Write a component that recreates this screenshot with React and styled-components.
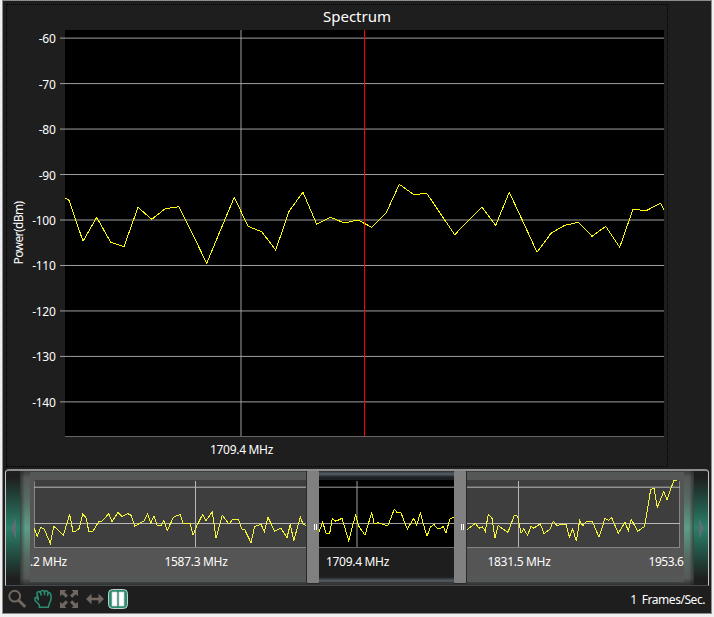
import React from "react";
import styled, { createGlobalStyle } from "styled-components";

const GlobalStyle = createGlobalStyle`
  * {
    box-sizing: border-box;
  }

  body {
    margin: 0;
    background: #f0f0f0;
    font-family: "Noto Sans", "Open Sans", sans-serif;
    color: #fff;
  }
`;

const Window = styled.main`
  width: 710px;
  height: 614px;
  margin-left: 2px;
  display: flex;
  flex-direction: column;
  background: #1e1e1e;
  border: 1px solid #8c8c8c;
`;

const ChartPanel = styled.section`
  width: 662px;
  height: 463px;
  margin: 3px 0 0 3px;
  border: 1px dotted #000;
`;

const ChartTitle = styled.h1`
  height: 24px;
  margin: 0;
  padding-left: 40px;
  font-size: 15px;
  font-weight: 400;
  line-height: 22px;
  text-align: center;
`;

const Chart = styled.svg`
  display: block;
`;

const Label = styled.text`
  fill: #fff;
  font-size: 12px;
  letter-spacing: ${({ $spacing }) => $spacing || "-0.3px"};
  text-anchor: ${({ $anchor }) => $anchor || "middle"};
`;

const GridLine = styled.path`
  fill: none;
  stroke: ${({ $color }) => $color || "#a0a0a0"};
  stroke-width: 1;
`;

const Trace = styled.polyline`
  fill: none;
  stroke: ${({ $color }) => $color || "#ffff00"};
  stroke-width: 1;
  shape-rendering: crispEdges;
`;

const Navigator = styled.section`
  position: relative;
  width: 704px;
  height: 117px;
  margin: 2px 0 0 2px;
  display: flex;
  overflow: hidden;
  background: #4a4a4a;
  border: 1px solid #c8c8c8;
  border-top: 2px solid #8e8e8e;
  border-bottom-color: #45484a;
  border-radius: 4px 4px 0 0;
`;

const ScrollButton = styled.button`
  width: 14px;
  padding: 0;
  border: 0;
  display: flex;
  align-items: center;
  justify-content: center;
  background: linear-gradient(#1e1e1e 5%, #245447 30%, #2b8069 50%, #245447 70%, #1e1e1e 95%);
`;

const Overview = styled.div`
  position: relative;
  flex: 1;
  height: 114px;
  background:
    linear-gradient(
      90deg,
      rgba(30, 30, 30, 0.6),
      transparent 5px,
      transparent calc(100% - 5px),
      rgba(30, 30, 30, 0.6)
    ),
    linear-gradient(#3a3d3c, #555957 6%, #566b63 25%, #5c9d88 50%, #566b63 75%, #555957 94%, #303232);
`;

const Track = styled.div`
  width: 654px;
  height: 101px;
  margin: 5px 0 0 10px;
  overflow: hidden;
  background: #555;
  border-radius: 4px;
`;

const Shade = styled.div`
  position: absolute;
  top: ${({ $top }) => $top}px;
  left: 10px;
  width: 654px;
  height: 6px;
  background: #535857;
`;

const RangeWindow = styled.div`
  position: absolute;
  top: 0;
  left: 301px;
  width: 159px;
  height: 114px;
  display: flex;
`;

const Handle = styled.div`
  width: 12px;
  height: 112px;
  padding-left: ${({ $shift }) => $shift || 0}px;
  display: flex;
  gap: 1px;
  align-items: center;
  justify-content: center;
  background: #808080;
  border-radius: 1px;
  box-shadow: 0 0 0 1px #292929;
`;

const Grip = styled.i`
  width: 1px;
  height: 6px;
  margin-top: 0;
  background: #fff;
`;

const Selection = styled.div`
  position: relative;
  z-index: 1;
  width: 135px;
  height: 112px;
  padding: 8px 0 0;
  background: linear-gradient(
    #2a2d2f,
    #566067 3px,
    #1e2225 6px,
    #1e1e1e 8px,
    #1e1e1e 106px,
    #586067 110px,
    #2a2d2f
  );
`;

const Toolbar = styled.footer`
  height: 26px;
  padding: 0 6px 0 5px;
  display: flex;
  align-items: center;
`;

const Tool = styled.button`
  width: ${({ $width }) => $width || 18}px;
  height: 20px;
  margin: 0 ${({ $gap }) => $gap || 8}px 0 0;
  padding: 0;
  border: 0;
  background: none;
  line-height: 0;
`;

const FrameRate = styled.span`
  margin-left: auto;
  display: flex;
  gap: 5px;
  font-size: 12px;
  letter-spacing: -0.45px;
`;

const levels = [-60, -70, -80, -90, -100, -110, -120, -130, -140];
const levelToY = (level) => 220 + (-100 - level) * 4.547;

const spectrum = `65,198 69,200.3 83,241.3 96.7,217.3 110.7,242.3 124,246.7 138,207.3
  151.7,219.3 165.3,208.7 179,206.7 193,235 206.7,263.3 220.5,230 234.3,197.3
  248,226.3 261.7,231.7 275.7,250 289.3,210.7 303,192.3 316.7,224.3 330.7,217.3
  344.3,223 358,220 371.7,227.3 386,213.3 399.3,184.3 413.3,194.3 427,193.7
  440.7,214 454.7,234.7 468.3,220.7 482,207.3 495.7,225.3 509.3,192.3 523.3,222.3
  537,252.3 551,233.3 564.7,225.3 578.3,222.3 592,236.3 605.7,226.3 619.7,247.3
  633,209.3 646.3,210.7 660.7,203 664,209.7`;

// overview samples, three units per pixel, each block with its own start
const sweep = [
  [0, [[102,192],[112,217],[122,190],[132,194],[151,238],[161,187],[170,194],[190,214],[209,151],[219,203],[228,201],[238,193],[248,151],[259,162],[266,202],[278,203],[296,173],[306,172],[326,149],[336,173],[354,145],[366,157],[384,149],[393,154],[404,187],[424,175],[433,170],[443,149],[452,178],[462,155],[471,183],[483,185],[491,169],[502,200]]],
  [170, [[10,160],[31,151],[39,178],[60,178],[69,214],[80,186],[98,151],[108,170],[127,143],[138,223],[157,154],[177,181],[187,167],[206,167],[215,195],[224,197],[243,236],[254,187],[273,181],[283,203],[294,160],[314,202],[332,192],[351,221],[361,181],[371,230],[391,160],[400,182],[410,184]]],
  [300, [[57,204],[68,175],[78,207],[89,208],[97,163],[107,172],[126,163],[146,230],[167,151],[175,184],[195,214],[215,145],[223,180],[235,176],[263,186],[283,136],[292,146],[303,147],[322,195],[341,163],[350,184],[361,146],[371,184],[381,217],[391,190],[401,181],[411,192],[419,195],[430,187],[438,208],[449,165],[462,160]]],
  [450, [[51,197],[76,178],[87,193],[97,188],[106,202],[115,151],[126,163],[135,223],[145,184],[155,193],[174,205],[193,154],[203,157],[213,208],[221,195],[233,214],[243,186],[251,193],[271,179],[282,209],[300,196],[310,172],[320,184],[348,180],[358,220],[368,194],[379,232],[389,169],[398,185],[409,173]]],
  [574, [[48,173],[56,174],[75,220],[93,163],[104,169],[113,161],[133,208],[153,175],[163,201],[172,166],[191,202],[212,187],[230,76],[240,73],[250,130],[269,83],[279,107],[299,50],[309,49]]],
];

const sweepPoints = sweep
  .flatMap(([start, samples]) =>
    samples.map(([x, y]) => `${(start + x / 3).toFixed(1)},${(464 + y / 3).toFixed(1)}`)
  )
  .join(" ");

const SpectrumChart = () => {
  return (
    <ChartPanel>
      <ChartTitle>Spectrum</ChartTitle>
      <Chart width="660" height="437" viewBox="7 29 660 437">
        <rect x="65" y="30" width="599" height="406" />

        {levels.map((level) => (
          <React.Fragment key={level}>
            <GridLine d={`M60 ${levelToY(level)}H664`} />
            <Label x="55.5" y={Math.round(levelToY(level)) + 5} $anchor="end">
              {level}
            </Label>
          </React.Fragment>
        ))}

        <GridLine d="M241 30V436" />
        <GridLine $color="#666" d="M65 436.5H664" />
        <Trace points={spectrum} />
        <GridLine $color="#f00" d="M364.5 30V436" />
        <Label x="241.5" y="454">
          1709.4 MHz
        </Label>
        <Label transform="translate(23 233) rotate(-90)" $spacing="-0.6px">
          Power(dBm)
        </Label>
      </Chart>
    </ChartPanel>
  );
};

const OverviewChart = ({ x, y, width, height, active }) => {
  return (
    <Chart width={width} height={height} viewBox={`${x} ${y} ${width} ${height}`}>
      <rect x="34" y="480" width="646" height="67" fill={active ? "#000" : "#3e3e3e"} />
      <GridLine $color={active ? "#666" : "#858585"} d="M34.5 481V547M34 547.5H680M679.5 481V547" />
      <GridLine
        $color={active ? "#a0a0a0" : "#b8b8b8"}
        d="M34 487.2H680M34 523.5H680M195.5 481V547M357 481V547M518.5 481V547"
      />
      <Trace $color={active ? "#ffff00" : "#f4f43a"} points={sweepPoints} />
      {active ? (
        <Label x="357.5" y="566">
          1709.4 MHz
        </Label>
      ) : (
        <>
          <Label x="30" y="566" $anchor="start">
            .2 MHz
          </Label>
          <Label x="196" y="566">
            1587.3 MHz
          </Label>
          <Label x="519" y="566">
            1831.5 MHz
          </Label>
          <Label x="648.5" y="566" $anchor="start" $spacing="-0.45px">
            1953.6
          </Label>
        </>
      )}
    </Chart>
  );
};

const SpectrumNavigator = () => {
  return (
    <Navigator>
      <ScrollButton aria-label="Scroll left">
        <svg width="5" height="21">
          <path d="M5 0V21L0 10.5Z" fill="#5e6c75" />
        </svg>
      </ScrollButton>

      <Overview>
        <Shade $top={1} />
        <Shade $top={105} />
        <Track>
          <OverviewChart x={30} y={476} width={654} height={101} />
        </Track>
      </Overview>

      <ScrollButton aria-label="Scroll right">
        <svg width="5" height="21">
          <path d="M0 0V21L5 10.5Z" fill="#5e6c75" />
        </svg>
      </ScrollButton>

      <RangeWindow>
        <Handle $shift={5}>
          <Grip />
          <Grip />
        </Handle>
        <Selection>
          <OverviewChart active x={319} y={479} width={135} height={98} />
        </Selection>
        <Handle $shift={5}>
          <Grip />
          <Grip />
        </Handle>
      </RangeWindow>
    </Navigator>
  );
};

const ChartTools = () => {
  return (
    <Toolbar>
      <Tool aria-label="Zoom">
        <svg width="18" height="20" fill="none" stroke="#706860">
          <circle cx="6.7" cy="7.2" r="5.4" strokeWidth="2" />
          <path d="M10.8 11.5L16.3 17" strokeWidth="3" strokeLinecap="round" />
        </svg>
      </Tool>
      <Tool aria-label="Pan">
        <svg width="18" height="20" fill="none" stroke="#2c8b70" strokeWidth="1.6" strokeLinejoin="round" strokeLinecap="round">
          <path d="M5.3 18.2V15.8L1.3 11.8Q.3 9.2 2 8.3L4.2 9.5 3 5Q2.8 3 4.3 2.7T6.5 3.5Q6.8 1.5 8.5 1.5T10.5 2.7Q12 1.3 13.2 2.2T14 4Q15.8 3.2 16.5 4.8T17 9.5Q17 12 15.5 14L14.3 18.2Z" />
          <path d="M6.5 3.5L7.2 6M10.5 2.8V5.6M14 4L13.7 6.5M4.2 9.5V11" />
        </svg>
      </Tool>
      <Tool aria-label="Fit">
        <svg width="18" height="20" fill="#706860">
          <path d="M0 1H6.5L4.5 3L8 6.5L5.8 8.7L2.2 5.2L0 7.2ZM18 1H11.5L13.5 3L10 6.5L12.2 8.7L15.8 5.2L18 7.2ZM0 19H6.5L4.5 17L8 13.5L5.8 11.3L2.2 14.8L0 12.8ZM18 19H11.5L13.5 17L10 13.5L12.2 11.3L15.8 14.8L18 12.8Z" />
        </svg>
      </Tool>
      <Tool aria-label="Fit width" $gap={4}>
        <svg width="18" height="20" fill="#706860">
          <path d="M0 10L5.5 4.8V8.7H12.5V4.8L18 10L12.5 15.2V11.3H5.5V15.2Z" />
        </svg>
      </Tool>
      <Tool aria-label="Pause" $width={20}>
        <svg width="20" height="20">
          <rect x=".5" y=".5" width="19" height="19" rx="4" fill="#288d70" stroke="#c0d4cc" />
          <path d="M4 3H9V17H4ZM11 3H16V17H11Z" fill="#fff" stroke="#d0cccc" strokeWidth=".7" />
        </svg>
      </Tool>
      <FrameRate>
        <span>1</span>
        <span>Frames/Sec.</span>
      </FrameRate>
    </Toolbar>
  );
};

const App = () => {
  return (
    <>
      <GlobalStyle />
      <Window>
        <SpectrumChart />
        <SpectrumNavigator />
        <ChartTools />
      </Window>
    </>
  );
};

export default App;
